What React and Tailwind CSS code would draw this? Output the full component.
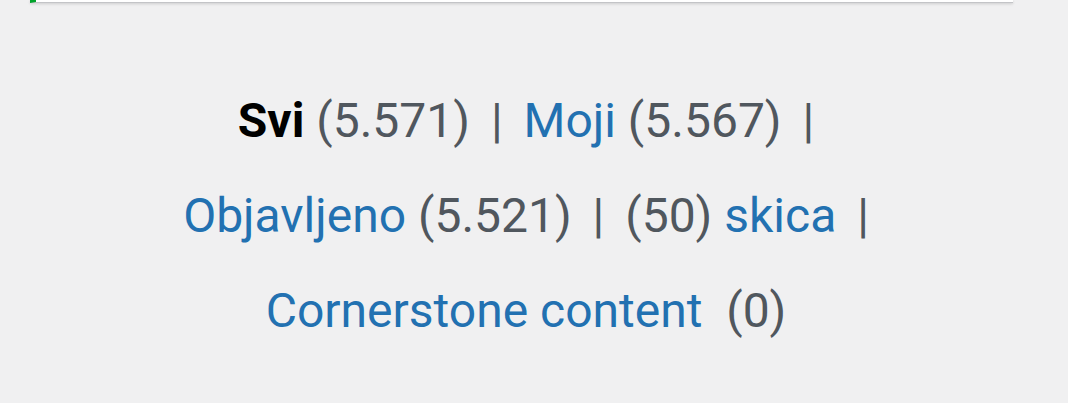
import React from 'react';

const views = [
  [
    { label: 'Svi', count: '(5.571)', current: true, sep: true },
    { label: 'Moji', count: '(5.567)', sep: true },
  ],
  [
    { label: 'Objavljeno', count: '(5.521)', sep: true },
    { pre: '(50)', label: 'skica', sep: true },
  ],
  [{ label: 'Cornerstone content', count: '(0)', wide: true }],
];

export default function App() {
  return (
    <div className="w-[1068px] h-[403px] bg-[#f0f0f1] overflow-hidden font-['Roboto',sans-serif]">
      <div className="ml-[30px] w-[983px] h-[3px] bg-white border-b border-[#c3c4c7] border-l-[6px] border-l-[#00a32a] shadow-[0_1px_3px_rgba(0,0,0,0.15)]" />
      <ul className="pt-[70px] pr-[16px] flex flex-col items-center text-[48px] leading-[95px] text-[#50575e]">
        {views.map((row, i) => (
          <li key={i} className="whitespace-pre">
            {row.map((v, j) => {
              const last = j === row.length - 1;
              return (
                <span key={j}>
                  {v.pre && <span>{v.pre} </span>}
                  <a className={v.current ? 'text-black font-bold' : 'text-[#2271b1]'}>{v.label}</a>
                  {v.count && <span>{v.wide ? '  ' : ' '}{v.count}</span>}
                  {v.sep && (
                    <span>
                      {' '}
                      <span className={last ? 'pl-[9px]' : 'px-[9px]'}>|</span>
                      {last ? '' : ' '}
                    </span>
                  )}
                </span>
              );
            })}
          </li>
        ))}
      </ul>
    </div>
  );
}
